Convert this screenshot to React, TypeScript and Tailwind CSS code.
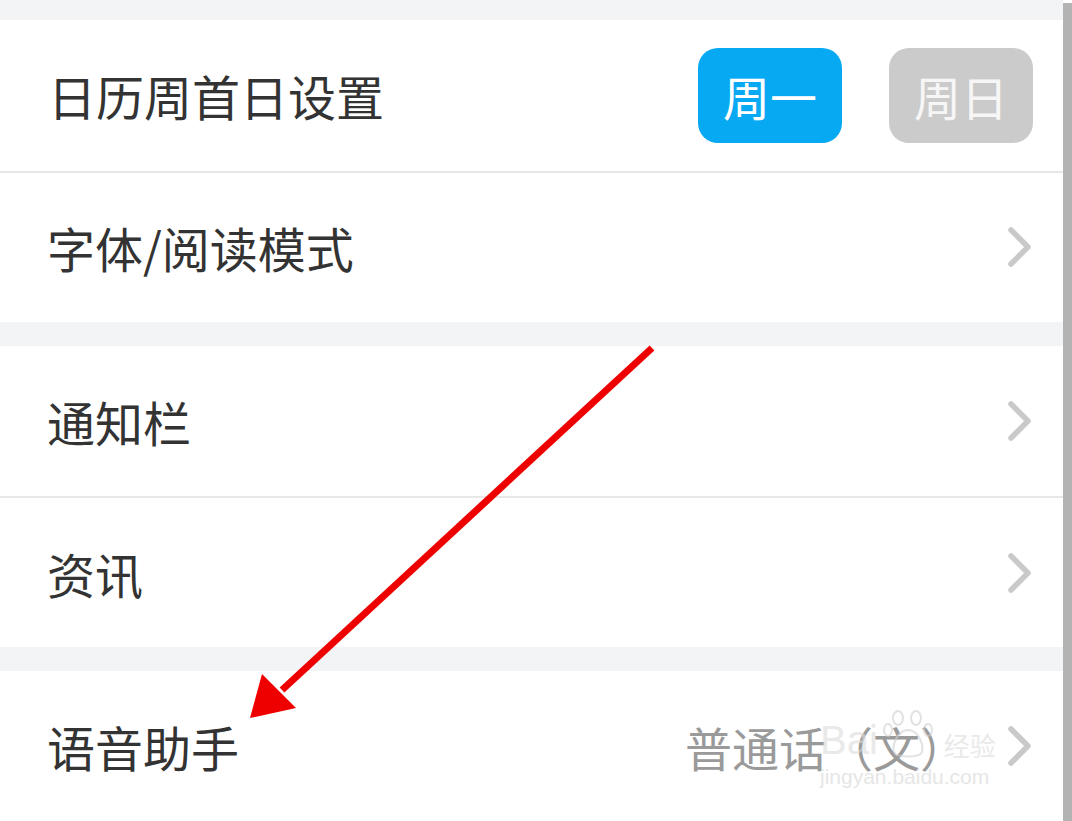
const font = { fontFamily: '"Noto Sans CJK SC", "Noto Sans", sans-serif' };

const Chevron = () => (
  <svg width="26" height="40" viewBox="0 0 26 40" className="shrink-0">
    <path d="M4 3 L21 20 L4 37" fill="none" stroke="#c9c9c9" strokeWidth="5.5" strokeLinecap="round" strokeLinejoin="round" />
  </svg>
);

const Row = ({ label, value, h }: { label: string; value?: string; h: string }) => (
  <div className={`flex items-center justify-between bg-white pl-[47px] pr-[30px] ${h}`}>
    <span className="text-[48px] text-[#333333] leading-none">{label}</span>
    <div className="flex items-center gap-[40px]">
      {value && <span className="text-[47px] text-[#9a9a9a] leading-none">{value}</span>}
      <Chevron />
    </div>
  </div>
);

export default function App() {
  return (
    <div className="relative flex w-[1072px] h-[821px] overflow-hidden bg-white" style={font}>
      <div className="flex flex-1 flex-col">
        <div className="h-[20px] bg-[#f3f4f6]" />
        <div className="flex h-[151px] items-center justify-between bg-white pl-[48px] pr-[30px]">
          <span className="text-[48px] text-[#333333] leading-none">日历周首日设置</span>
          <div className="flex items-center gap-[47px]">
            <button className="flex h-[95px] w-[144px] items-center justify-center rounded-[20px] bg-[#07a9f2] text-[47px] text-white leading-none">
              周一
            </button>
            <button className="flex h-[95px] w-[144px] items-center justify-center rounded-[20px] bg-[#cbcbcb] text-[47px] text-[#f6f6f6] leading-none">
              周日
            </button>
          </div>
        </div>
        <div className="h-[2px] bg-[#e8e8e8]" />
        <Row label="字体/阅读模式" h="h-[150px]" />
        <div className="h-[24px] bg-[#f3f4f6]" />
        <Row label="通知栏" h="h-[150px]" />
        <div className="h-[2px] bg-[#e8e8e8]" />
        <Row label="资讯" h="h-[150px]" />
        <div className="h-[24px] bg-[#f3f4f6]" />
        <Row label="语音助手" value="普通话（文）" h="h-[150px]" />
      </div>
      <div className="mt-[3px] w-[9px] bg-[#b3b3b3]" />

      {/* watermark */}
      <div
        className="pointer-events-none absolute left-[820px] top-[708px] flex flex-col items-start text-[#dcdcdc]"
        style={{ fontFamily: '"Liberation Sans", "Noto Sans CJK SC", sans-serif' }}
      >
        <div className="flex items-end gap-[4px]">
          <span className="text-[40px] leading-none opacity-60">Bai</span>
          <svg width="52" height="52" viewBox="0 0 52 52" className="opacity-60">
            <g fill="none" stroke="#cfcfcf" strokeWidth="2">
              <ellipse cx="16" cy="10" rx="5" ry="7" />
              <ellipse cx="34" cy="10" rx="5" ry="7" />
              <ellipse cx="6" cy="22" rx="4" ry="6" />
              <ellipse cx="46" cy="22" rx="4" ry="6" />
              <path d="M26 22 C16 22 10 36 12 44 C14 50 38 50 40 44 C42 36 36 22 26 22 Z" />
            </g>
          </svg>
          <span className="ml-[6px] text-[26px] leading-none opacity-60">经验</span>
        </div>
        <span className="mt-[6px] text-[21px] leading-none opacity-70">jingyan.baidu.com</span>
      </div>

      {/* red arrow annotation */}
      <svg className="pointer-events-none absolute left-0 top-0" width="1072" height="821">
        <line x1="652" y1="348" x2="282" y2="690" stroke="#ee0000" strokeWidth="7" />
        <polygon points="250,718 262,674 296,708" fill="#ee0000" />
      </svg>
    </div>
  );
}
